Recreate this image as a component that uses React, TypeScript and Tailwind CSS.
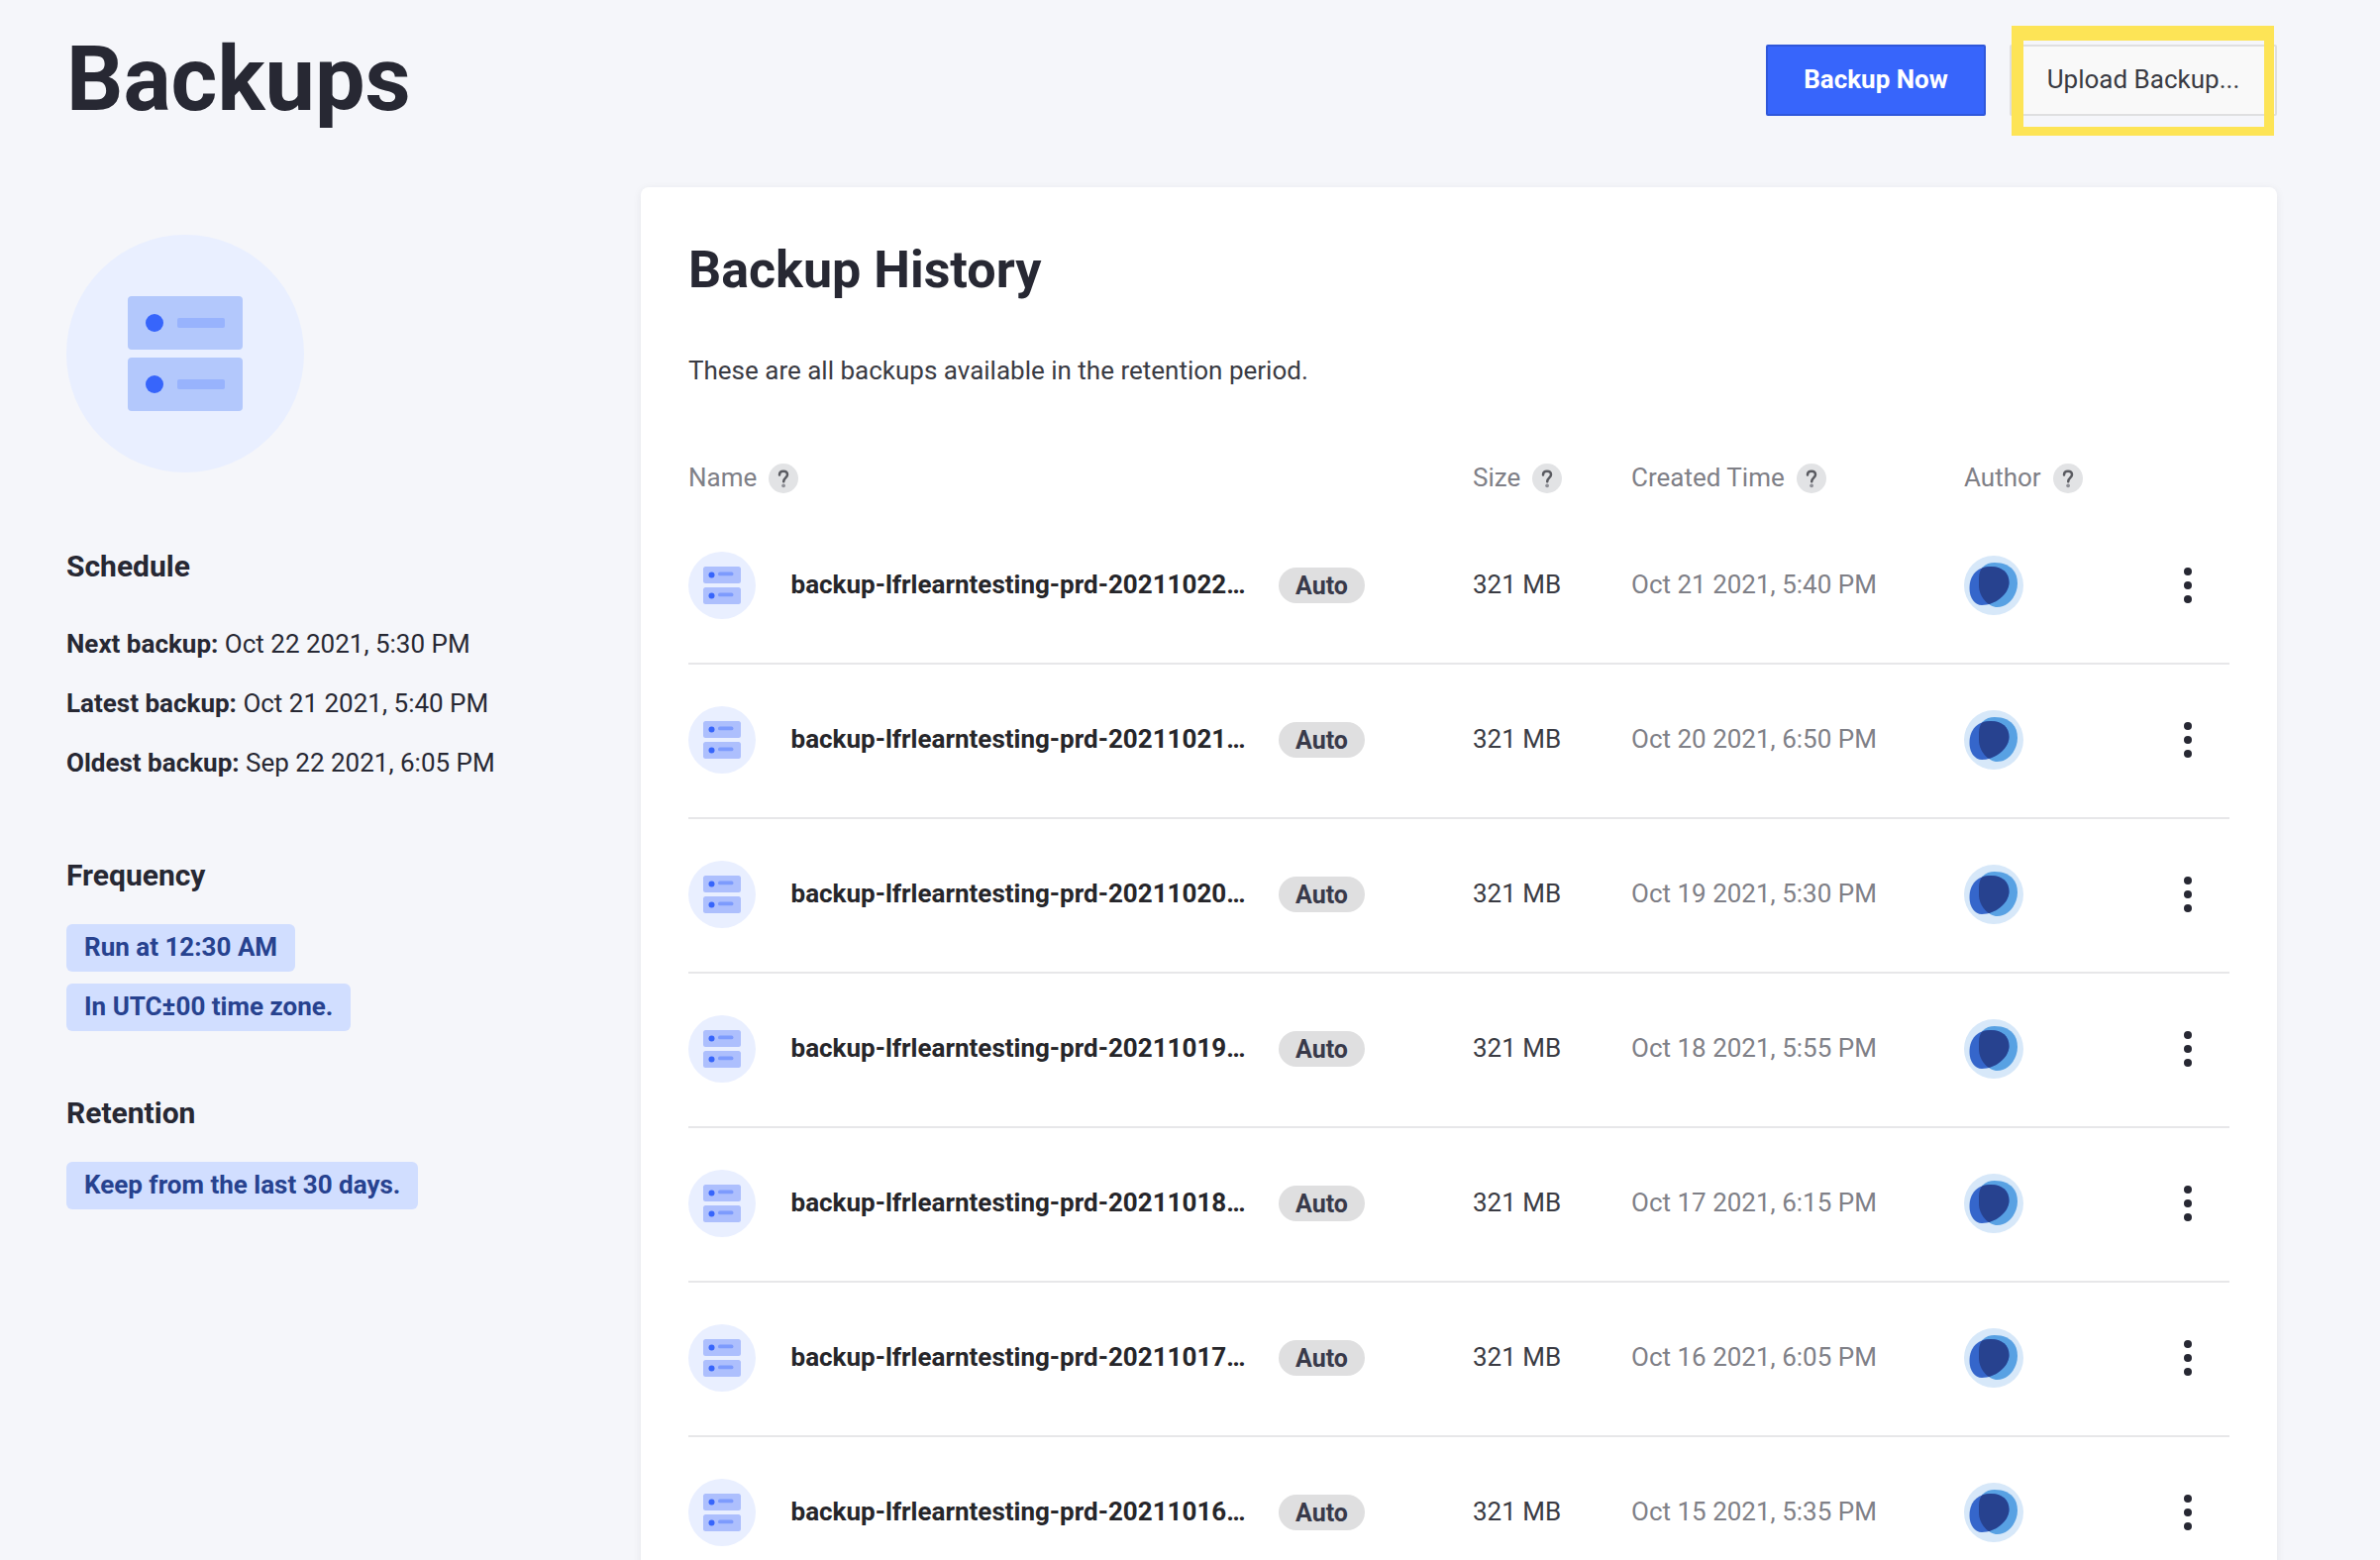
const rows = [
  { name: "backup-lfrlearntesting-prd-20211022…", time: "Oct 21 2021, 5:40 PM" },
  { name: "backup-lfrlearntesting-prd-20211021…", time: "Oct 20 2021, 6:50 PM" },
  { name: "backup-lfrlearntesting-prd-20211020…", time: "Oct 19 2021, 5:30 PM" },
  { name: "backup-lfrlearntesting-prd-20211019…", time: "Oct 18 2021, 5:55 PM" },
  { name: "backup-lfrlearntesting-prd-20211018…", time: "Oct 17 2021, 6:15 PM" },
  { name: "backup-lfrlearntesting-prd-20211017…", time: "Oct 16 2021, 6:05 PM" },
  { name: "backup-lfrlearntesting-prd-20211016…", time: "Oct 15 2021, 5:35 PM" },
];

const schedule = [
  { label: "Next backup:", value: "Oct 22 2021, 5:30 PM" },
  { label: "Latest backup:", value: "Oct 21 2021, 5:40 PM" },
  { label: "Oldest backup:", value: "Sep 22 2021, 6:05 PM" },
];

const columns = "grid grid-cols-[792px_160px_336px_202px_66px]";

function LargeServerIcon() {
  return (
    <svg className="block" width="240" height="240" viewBox="0 0 240 240">
      <circle cx="120" cy="120" r="120" fill="#e9efff" />
      {[62, 124].map((y) => (
        <g key={y}>
          <rect x="62" y={y} width="116" height="54" rx="4" fill="#b3c8fc" />
          <circle cx="89" cy={y + 27} r="9" fill="#3765fb" />
          <rect x="112" y={y + 22} width="48" height="10" rx="2" fill="#98b3fd" />
        </g>
      ))}
    </svg>
  );
}

function ServerIcon() {
  return (
    <svg className="block" width="68" height="68" viewBox="0 0 68 68">
      <circle cx="34" cy="34" r="34" fill="#e9efff" />
      {[15, 36].map((y) => (
        <g key={y}>
          <rect x="15" y={y} width="38" height="17" rx="2.5" fill="#adbffd" />
          <circle cx="23.5" cy={y + 8.5} r="3" fill="#3765fb" />
          <rect x="30" y={y + 5.5} width="15.5" height="3.8" rx="1.9" fill="#7d9bfd" />
        </g>
      ))}
    </svg>
  );
}

function Avatar() {
  const back =
    "M15 23 C15 13 21 7 31 7 C44 7 54 14 54 28 C54 39 46 52 33.500 52 C25 52 15 42 15 30 Z";
  const front =
    "M5.500 33 C5.500 19 14 11 27 11 C38 11 45.500 17 45.500 27 C45.500 39 31 50 18 50 C11 50 5.500 43 5.500 33 Z";
  return (
    <svg className="block" width="60" height="60" viewBox="0 0 60 60">
      <defs>
        <clipPath id="avatar-back">
          <path d={back} />
        </clipPath>
      </defs>
      <circle cx="30" cy="30" r="30" fill="#d7e8f9" />
      <path d={back} fill="#58a1e3" />
      <path d={front} fill="#3566cb" />
      <path d={front} fill="#27428f" clipPath="url(#avatar-back)" />
    </svg>
  );
}

function HeaderCell({ label }: { label: string }) {
  return (
    <div className="flex items-center gap-3">
      <span className="-mt-0.5 text-[26px] leading-8 text-[#7f8087]">{label}</span>
      <svg width="30" height="30" viewBox="0 0 30 30">
        <circle cx="15" cy="15" r="15" fill="#e2e3e5" />
        <path
          d="M11 11.500 C11 8.900 12.700 7.800 15 7.800 C17.400 7.800 19 9.200 19 11.300 C19 14.300 15.200 14.600 15.200 18.200"
          fill="none"
          stroke="#5a5b61"
          strokeWidth="2.500"
          strokeLinecap="round"
        />
        <circle cx="15.100" cy="22.300" r="1.900" fill="#8e8f96" />
      </svg>
    </div>
  );
}

function Tag({ children }: { children: string }) {
  return (
    <div className="h-12 w-fit rounded-md bg-[#d1deff] px-[18px] text-[26px] leading-[46px] font-bold text-[#27428f]">
      {children}
    </div>
  );
}

export default function App() {
  return (
    <div className="flex h-[1575px] w-[2403px] flex-col overflow-hidden bg-[#f5f6fa] pl-[67px] font-['Roboto',sans-serif] text-[#272833]">
      <header className="flex h-[189px] w-[2232px] shrink-0 justify-between">
        <h1 className="mt-[25px] text-[90px] leading-[112px] font-bold">Backups</h1>
        <div className="mt-[45px] flex h-[72px] gap-6">
          <button className="w-[222px] rounded-xs border-2 border-[#2f57da] bg-[#3765fb] pb-0.5 text-[26px] font-bold text-white">
            Backup Now
          </button>
          <div className="relative w-[270px]">
            <button className="h-full w-full rounded-xs border-2 border-[#dfdfe0] bg-[#f9f9f9] pb-0.5 text-[26px] text-[#3a3b43]">
              Upload Backup...
            </button>
            <div className="absolute -top-[19px] left-0.5 h-[111px] w-[265px] border-t-[15px] border-r-[10px] border-b-[9px] border-l-[12px] border-[#fde456]" />
          </div>
        </div>
      </header>

      <div className="flex">
        <aside className="w-[580px] shrink-0 pt-12">
          <LargeServerIcon />
          <h2 className="mt-[75px] text-[30px] leading-10 font-bold">Schedule</h2>
          <div className="mt-7">
            {schedule.map((item) => (
              <p key={item.label} className="text-[26px] leading-[60px]">
                <b className="font-bold">{item.label}</b> {item.value}
              </p>
            ))}
          </div>
          <h2 className="mt-16 text-[30px] leading-10 font-bold">Frequency</h2>
          <div className="mt-[29px] flex flex-col gap-3">
            <Tag>Run at 12:30 AM</Tag>
            <Tag>In UTC±00 time zone.</Tag>
          </div>
          <h2 className="mt-[63px] text-[30px] leading-10 font-bold">Retention</h2>
          <div className="mt-[29px]">
            <Tag>Keep from the last 30 days.</Tag>
          </div>
        </aside>

        <main className="h-[1500px] w-[1652px] shrink-0 rounded-lg bg-white px-12 shadow-[0_2px_8px_rgba(39,40,51,0.08)]">
          <h2 className="mt-[52px] text-[52px] leading-[64px] font-bold">Backup History</h2>
          <p className="mt-[49px] text-[26px] leading-10 text-[#3a3b43]">
            These are all backups available in the retention period.
          </p>
          <div className={`${columns} mt-[74px] h-[30px] items-center`}>
            <HeaderCell label="Name" />
            <HeaderCell label="Size" />
            <HeaderCell label="Created Time" />
            <HeaderCell label="Author" />
          </div>
          <div className="mt-[15px]">
            {rows.map((row) => (
              <div
                key={row.name}
                className={`${columns} h-[158px] -mb-0.5 items-center border-b-2 border-[#e7e7e9] text-[26px]`}
              >
                <div className="flex items-center">
                  <ServerIcon />
                  <span className="mb-0.5 ml-[35.5px] w-[460.5px] text-[26px] leading-8 font-bold whitespace-nowrap text-[#26262a]">
                    {row.name}
                  </span>
                  <span className="ml-8 h-9 w-[87px] rounded-full bg-[#dfdfe0] text-center text-[25px] leading-[38px] font-bold text-[#393a4a]">
                    Auto
                  </span>
                </div>
                <span className="mb-0.5 leading-8 text-[#3a3b43]">321 MB</span>
                <span className="mb-0.5 leading-8 text-[#7f8087]">{row.time}</span>
                <Avatar />
                <svg className="ml-5" width="8" height="36" viewBox="0 0 8 36" fill="#272833">
                  <circle cx="4" cy="4" r="4" />
                  <circle cx="4" cy="18" r="4" />
                  <circle cx="4" cy="32" r="4" />
                </svg>
              </div>
            ))}
          </div>
        </main>
      </div>
    </div>
  );
}
